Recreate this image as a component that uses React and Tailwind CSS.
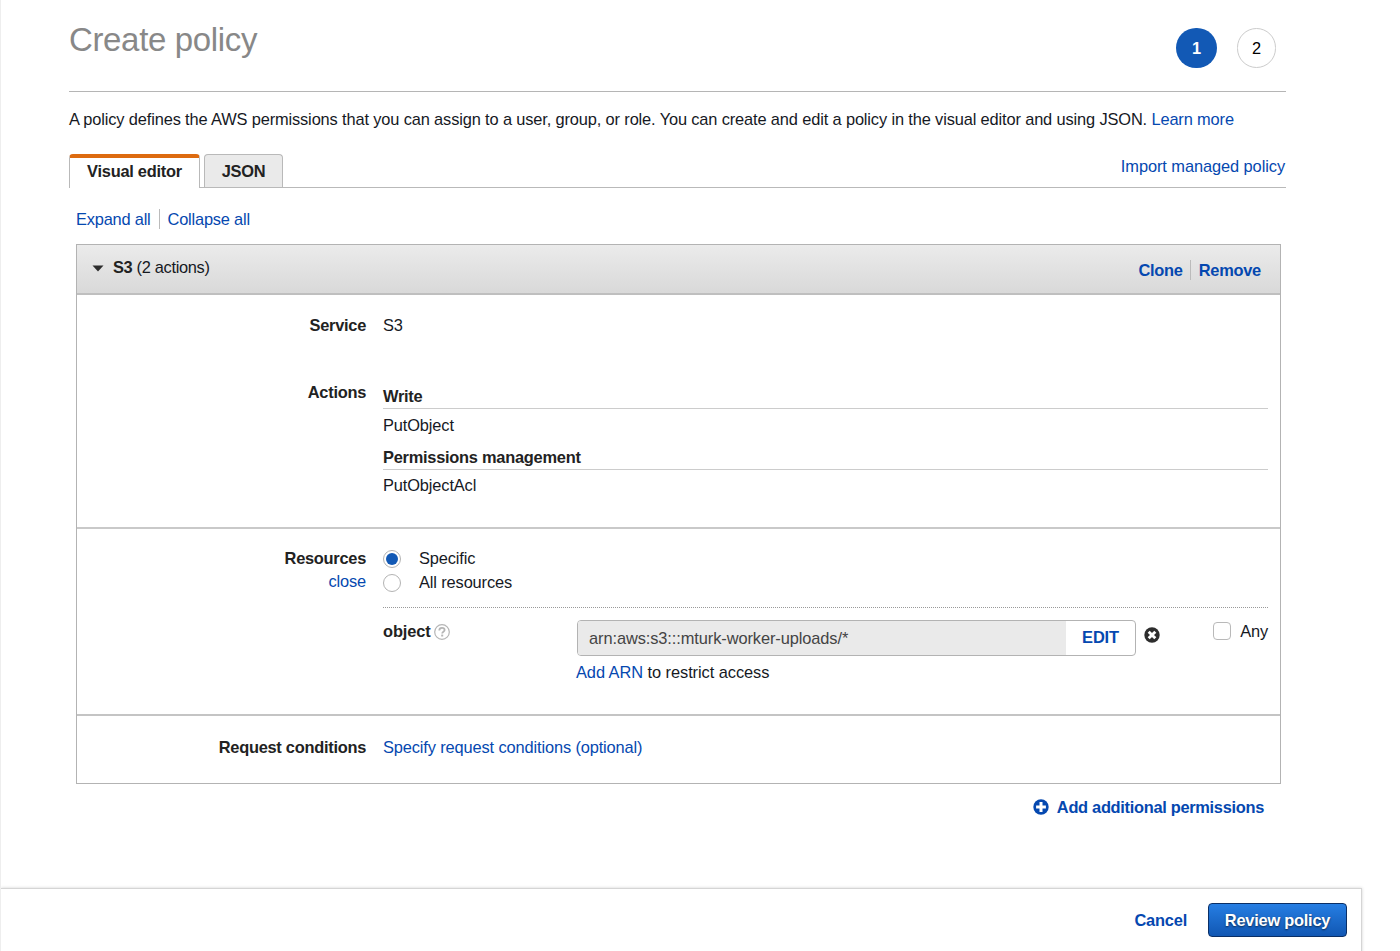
import React, { useState } from "react";

const Link = ({ children, className = "" }) => (
  <a href="#" className={`text-[#0548b0] whitespace-nowrap ${className}`}>
    {children}
  </a>
);

const Label = ({ children }) => (
  <div className="w-[289px] shrink-0 text-right font-bold text-[#222] tracking-[-0.27px]">
    {children}
  </div>
);

const Radio = ({ label, checked, onClick }) => (
  <div className="flex items-center h-6 cursor-pointer" onClick={onClick}>
    <span className="flex items-center justify-center w-[18px] h-[18px] rounded-full border border-[#b3b3b3] bg-white mt-0.5">
      {checked ? (
        <span className="w-3 h-3 rounded-full bg-[#1259b5]"></span>
      ) : null}
    </span>
    <span className="ml-[18px]">{label}</span>
  </div>
);

const HelpIcon = () => (
  <svg className="w-4 h-4 ml-[3px] mt-[3.5px]" viewBox="0 0 16 16" fill="none">
    <circle cx="8" cy="8" r="7.3" stroke="#b5b5b5" strokeWidth="1.2" />
    <path
      d="M5.3 6.4C5.3 4.6 6.5 3.9 8 3.9s2.6.8 2.6 2.2c0 1.7-2.4 1.7-2.4 3.4"
      stroke="#b5b5b5"
      strokeWidth="1.8"
    />
    <rect x="7.2" y="10.6" width="2" height="1.9" fill="#b5b5b5" />
  </svg>
);

const RemoveIcon = () => (
  <svg className="w-4 h-4" viewBox="0 0 16 16">
    <circle cx="8" cy="8" r="7.7" fill="#2d2d2d" />
    <path
      d="M4.7 4.7l6.6 6.6M11.3 4.7l-6.6 6.6"
      stroke="#fff"
      strokeWidth="2.9"
    />
  </svg>
);

const PlusIcon = () => (
  <svg className="w-4 h-4 mt-[0.5px]" viewBox="0 0 16 16">
    <circle cx="8" cy="8" r="7.7" fill="#0548b0" />
    <path d="M8 3.1v9.8M3.1 8h9.8" stroke="#fff" strokeWidth="3" />
  </svg>
);

const App = () => {
  const [resource, setResource] = useState("specific");

  return (
    <div className="flex flex-col h-[951px] w-[1400px] overflow-hidden bg-white border-l border-[#eee] font-['Liberation_Sans',Arial,sans-serif] text-[16.4px] leading-5 tracking-[-0.13px] text-[#16191f]">
      <div className="ml-[68px] w-[1217px] h-[888px] shrink-0">
        {/* Titulo y pasos */}
        <header className="flex justify-between h-[92px] border-b border-[#b5b5b5]">
          <h1 className="mt-5 text-[33px] leading-10 text-[#888] tracking-[-0.35px]">
            Create policy
          </h1>
          <div className="flex gap-5 mt-7 mr-2.5">
            <span className="flex items-center justify-center w-[41px] h-10 rounded-full bg-[#1259b5] text-white font-bold">
              1
            </span>
            <span className="flex items-center justify-center w-[39px] h-10 rounded-full border border-[#ccc] text-black">
              2
            </span>
          </div>
        </header>

        <p className="mt-[17px] whitespace-nowrap tracking-[-0.138px]">
          A policy defines the AWS permissions that you can assign to a user,
          group, or role. You can create and edit a policy in the visual editor
          and using JSON. <Link>Learn more</Link>
        </p>

        {/* Tabs */}
        <div className="flex justify-between h-[34px] mt-[25px] border-b border-[#b9b9b9]">
          <div className="flex gap-1 font-bold text-[#222] tracking-[-0.25px]">
            <div className="flex justify-center w-[131px] h-[34px] rounded-t border-x border-x-[#b9b9b9] border-t-4 border-t-[#dd6b10] bg-white pt-[3px]">
              Visual editor
            </div>
            <div className="flex justify-center w-[79px] h-[33px] rounded-t border border-b-0 border-[#b9b9b9] bg-[#eaeaea] pt-1.5">
              JSON
            </div>
          </div>
          <Link className="mt-0.5 mr-px tracking-[-0.08px]">
            Import managed policy
          </Link>
        </div>

        <div className="flex mt-[21px] ml-[7px] tracking-[-0.2px]">
          <Link className="pr-2 border-r border-[#bbb]">Expand all</Link>
          <Link className="pl-2">Collapse all</Link>
        </div>

        {/* Panel del servicio */}
        <div className="mt-[15px] ml-[7px] w-[1205px] h-[540px] border border-[#b3b3b3]">
          <div className="flex justify-between h-[50px] px-[15px] border-b-2 border-[#bfbfbf] bg-linear-to-b from-[#ebebeb] to-[#d9d9d9]">
            <div className="flex pt-3 tracking-[-0.33px]">
              <svg className="w-3 h-[7px] mt-2 mr-[9px]" viewBox="0 0 12 7">
                <path d="M0.5 0.5h11L6 6.5z" fill="#2d2d2d" />
              </svg>
              <span>
                <b className="text-[#222]">S3</b> (2 actions)
              </span>
            </div>
            <div className="flex pt-[15px] mr-1 font-bold tracking-[-0.25px]">
              <Link className="h-5 pr-[7px] border-r border-[#bbb]">Clone</Link>
              <Link className="pl-2">Remove</Link>
            </div>
          </div>

          <section className="h-[234px] pt-5 border-b-2 border-[#c9c9c9]">
            <div className="flex gap-[17px] h-[67px]">
              <Label>Service</Label>
              <div>S3</div>
            </div>
            <div className="flex gap-[17px]">
              <Label>Actions</Label>
              <div className="w-[885px] pt-1">
                <div className="h-[23px] border-b border-[#ccc] font-bold text-[#222] tracking-[-0.25px]">
                  Write
                </div>
                <div className="mt-[6px]">PutObject</div>
                <div className="mt-3 h-[23px] border-b border-[#ccc] font-bold text-[#222] tracking-[-0.25px]">
                  Permissions management
                </div>
                <div className="mt-[5px]">PutObjectAcl</div>
              </div>
            </div>
          </section>

          <section className="flex gap-[17px] h-[187px] pt-[19px] border-b-2 border-[#c4c4c4]">
            <div>
              <Label>Resources</Label>
              <div className="mt-[3px] text-right">
                <Link>close</Link>
              </div>
            </div>
            <div className="w-[885px] -mt-0.5">
              <Radio
                label="Specific"
                checked={resource === "specific"}
                onClick={() => setResource("specific")}
              />
              <Radio
                label="All resources"
                checked={resource === "all"}
                onClick={() => setResource("all")}
              />
              <div className="flex mt-[13px] pt-3 border-t border-dotted border-[#999]">
                <div className="flex w-[194px] h-6 font-bold text-[#222]">
                  <span className="mt-px">object</span>
                  <HelpIcon />
                </div>
                <div>
                  <div className="flex w-[559px] h-9 rounded border border-[#b3b3b3] bg-white overflow-hidden">
                    <div className="w-[488px] bg-[#eaeaea] pl-[11px] pt-[7px] text-[#444] tracking-[-0.09px]">
                      arn:aws:s3:::mturk-worker-uploads/*
                    </div>
                    <Link className="flex-1 pt-1.5 text-center font-bold">
                      EDIT
                    </Link>
                  </div>
                  <div className="mt-1.5 -ml-px tracking-[-0.06px]">
                    <Link>Add ARN</Link> to restrict access
                  </div>
                </div>
                <div className="mt-[7px] ml-2">
                  <RemoveIcon />
                </div>
                <div className="flex ml-auto mt-px">
                  <span className="w-[18px] h-[18px] mt-px mr-[9px] rounded border border-[#b9b9b9]"></span>
                  Any
                </div>
              </div>
            </div>
          </section>

          <section className="flex gap-[17px] pt-[21px]">
            <Label>Request conditions</Label>
            <Link>Specify request conditions (optional)</Link>
          </section>
        </div>

        <div className="flex justify-end mt-[14px] mr-[22px] font-bold tracking-[-0.3px]">
          <PlusIcon />
          <Link className="ml-2 -mt-px">Add additional permissions</Link>
        </div>
      </div>

      {/* Acciones */}
      <footer className="flex justify-end w-[1361px] h-[70px] shrink-0 pt-3.5 pr-[14px] border-t border-r border-[#d5d5d5] bg-white shadow-[0_0_3px_rgba(0,0,0,0.18)] font-bold tracking-[-0.2px]">
        <Link className="mt-[7px] mr-[21px]">Cancel</Link>
        <button className="w-[139px] h-[34px] rounded border border-[#0a2f66] bg-linear-to-b from-[#267ee3] to-[#1157b3] text-white tracking-[-0.24px] text-shadow-[0_1px_2px_rgba(0,0,0,0.6)]">
          Review policy
        </button>
      </footer>
    </div>
  );
};

export default App;
